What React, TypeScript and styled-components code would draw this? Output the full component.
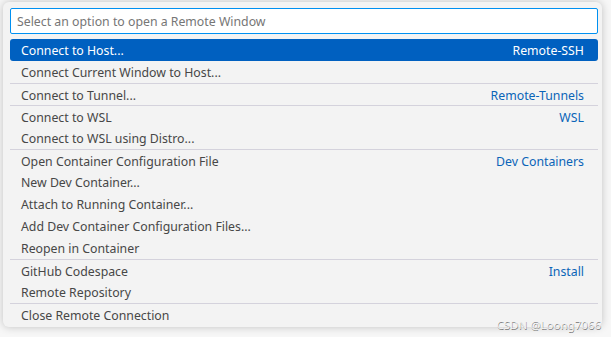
import styled, { createGlobalStyle } from "styled-components";

const GlobalStyle = createGlobalStyle`
  html, body {
    margin: 0;
    padding: 0;
    background: #f7f7f7;
  }
  body {
    font-family: "Noto Sans", "Open Sans", sans-serif;
    width: 611px;
    height: 337px;
    overflow: hidden;
  }
`;

const Stage = styled.div`
  position: relative;
  width: 611px;
  height: 337px;
  padding: 2px 0 0 3px;
  box-sizing: border-box;
`;

const Panel = styled.div`
  width: 599px;
  height: 325px;
  box-sizing: border-box;
  padding: 6px 4px 2px 7px;
  background: #f3f3f3;
  border-radius: 6px;
  box-shadow: 0 0 8px rgba(0, 0, 0, 0.22);
  display: flex;
  flex-direction: column;
  gap: 5px;
`;

const Input = styled.div`
  height: 26px;
  box-sizing: border-box;
  border: 1px solid #0090f1;
  background: #ffffff;
  border-radius: 2px;
  display: flex;
  align-items: center;
  padding: 1px 6px 0;
  font-size: 12.3px;
  color: #767676;
`;

const List = styled.div`
  display: flex;
  flex-direction: column;
`;

const Row = styled.div<{ $active?: boolean; $sep?: boolean }>`
  height: 22px;
  box-sizing: border-box;
  display: flex;
  align-items: center;
  justify-content: space-between;
  padding: 1px 14px 0 11px;
  font-size: 12.3px;
  border-radius: ${(p) => (p.$active ? "3px" : "0")};
  background: ${(p) => (p.$active ? "#0060c0" : "transparent")};
  color: ${(p) => (p.$active ? "#ffffff" : "#474747")};
  border-top: ${(p) => (p.$sep ? "1px solid #d4d2dc" : "none")};
`;

const Label = styled.span<{ $active?: boolean }>`
  color: ${(p) => (p.$active ? "#ffffff" : "#0a64b8")};
`;

const Watermark = styled.div`
  position: absolute;
  right: 10px;
  bottom: 5px;
  font-size: 11.5px;
  color: #f4f4f4;
  text-shadow: 0.5px 0.5px 0.5px rgba(0, 0, 0, 0.45);
`;

type Item = { text: string; label?: string; sep?: boolean };

const items: Item[] = [
  { text: "Connect to Host...", label: "Remote-SSH" },
  { text: "Connect Current Window to Host..." },
  { text: "Connect to Tunnel...", label: "Remote-Tunnels", sep: true },
  { text: "Connect to WSL", label: "WSL", sep: true },
  { text: "Connect to WSL using Distro..." },
  { text: "Open Container Configuration File", label: "Dev Containers", sep: true },
  { text: "New Dev Container..." },
  { text: "Attach to Running Container..." },
  { text: "Add Dev Container Configuration Files..." },
  { text: "Reopen in Container" },
  { text: "GitHub Codespace", label: "Install", sep: true },
  { text: "Remote Repository" },
  { text: "Close Remote Connection", sep: true },
];

export default function App() {
  return (
    <>
      <GlobalStyle />
      <Stage>
        <Panel>
          <Input>Select an option to open a Remote Window</Input>
          <List>
            {items.map((item, i) => (
              <Row key={item.text} $active={i === 0} $sep={item.sep}>
                <span>{item.text}</span>
                {item.label && <Label $active={i === 0}>{item.label}</Label>}
              </Row>
            ))}
          </List>
        </Panel>
        <Watermark>CSDN @Loong7066</Watermark>
      </Stage>
    </>
  );
}
